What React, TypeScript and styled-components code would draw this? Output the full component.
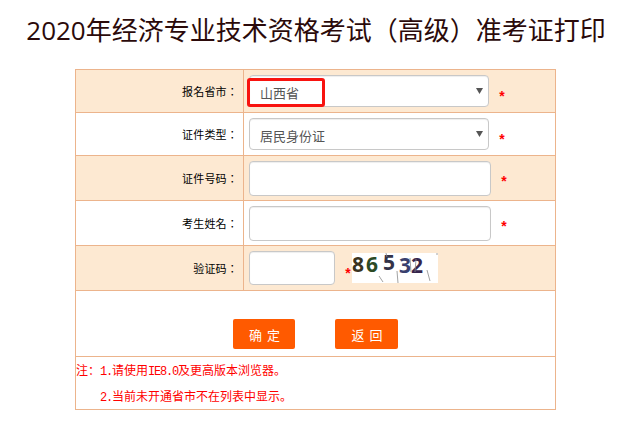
import React from "react";
import styled, { createGlobalStyle } from "styled-components";

const Global = createGlobalStyle`
  html, body { margin: 0; padding: 0; background: #fff; }
  body { width: 624px; height: 432px; overflow: hidden; font-family: "Liberation Sans", "Noto Sans CJK SC", sans-serif; }
`;

const Page = styled.div`
  width: 624px;
  height: 432px;
  overflow: hidden;
`;

const Title = styled.h1`
  margin: 0;
  height: 69px;
  padding: 13px 0 0 8px;
  box-sizing: border-box;
  text-align: center;
  font: 400 26px/34px "Open Sans", "Noto Sans CJK SC", sans-serif;
  color: #2b0a0a;
  white-space: nowrap;
`;

const Table = styled.div`
  margin-left: 75px;
  width: 481px;
  box-sizing: border-box;
  border: 1px solid #ecb48c;
`;

const Row = styled.div<{ $h: number; $shade?: boolean }>`
  display: grid;
  grid-template-columns: 168px 1fr;
  height: ${(p) => p.$h}px;
  box-sizing: border-box;
  border-bottom: 1px solid #ecb48c;
  background: ${(p) => (p.$shade ? "#fde9d2" : "#fff")};
`;

const Label = styled.div`
  display: flex;
  align-items: center;
  justify-content: flex-end;
  padding-right: 5px;
  border-right: 1px solid #ecb48c;
  font: 11px "Noto Sans CJK TC", sans-serif;
  color: #000;
  letter-spacing: 0.2px;
`;

const Cell = styled.div`
  display: flex;
  align-items: center;
  padding-left: 5px;
  position: relative;
`;

const SelectBox = styled.div`
  position: relative;
  box-sizing: border-box;
  width: 240px;
  height: 32px;
  border: 1px solid #c8c8c8;
  border-radius: 4px;
  background: #fff;
  display: flex;
  align-items: center;
  padding: 2px 0 0 10px;
  font: 13px "Noto Sans CJK SC", sans-serif;
  color: #555;
  box-shadow: inset 0 1px 1px rgba(0, 0, 0, 0.07);
`;

const Arrow = styled.svg`
  position: absolute;
  right: 4px;
  top: 11px;
  width: 9px;
  height: 8px;
`;

const Highlight = styled.div`
  position: absolute;
  left: 3px;
  top: 8px;
  width: 78px;
  height: 29px;
  box-sizing: border-box;
  border: 3px solid #f8130f;
  border-radius: 3px;
  pointer-events: none;
`;

const TextInput = styled.input<{ $w: number; $h: number }>`
  box-sizing: border-box;
  width: ${(p) => p.$w}px;
  height: ${(p) => p.$h}px;
  border: 1px solid #c8c8c8;
  border-radius: 4px;
  background: #fff;
  outline: none;
  box-shadow: inset 0 1px 1px rgba(0, 0, 0, 0.07);
`;

const Star = styled.span<{ $dy: number }>`
  display: inline-block;
  width: 8px;
  margin-left: 9px;
  text-align: center;
  position: relative;
  top: ${(p) => p.$dy}px;
  font: 700 14px/14px "Liberation Sans", sans-serif;
  color: #f00;
`;

const Captcha = styled.div`
  position: relative;
  width: 86px;
  height: 30px;
  background: #fff;
`;

const Digit = styled.span<{ $c: string; $x: number; $y: number }>`
  position: absolute;
  left: ${(p) => p.$x}px;
  top: ${(p) => p.$y}px;
  font: 700 21px/24px "Open Sans", "Liberation Sans", sans-serif;
  color: ${(p) => p.$c};
`;

const Noise = styled.svg`
  position: absolute;
  inset: 0;
  width: 86px;
  height: 30px;
`;

const ButtonRow = styled.div`
  height: 66px;
  box-sizing: border-box;
  border-bottom: 1px solid #ecb48c;
  padding: 28px 0 0 157px;
  display: flex;
  gap: 40px;
`;

const Btn = styled.button<{ $w: number }>`
  width: ${(p) => p.$w}px;
  height: 30px;
  padding: 0 0 0 2px;
  border: none;
  border-radius: 2px;
  background: #ff5a00;
  color: #fff;
  font: 13px "Noto Sans CJK SC", sans-serif;
  letter-spacing: 1px;
  white-space: pre;
`;

const Notes = styled.div`
  height: 52px;
  box-sizing: border-box;
  color: #f00;
  font: 12px/26px "Noto Sans CJK SC", sans-serif;
`;

const NoteLine = styled.div<{ $indent?: number }>`
  padding-left: ${(p) => p.$indent ?? 0}px;
  white-space: nowrap;
  height: 26px;
`;

const Latin = styled.span`
  font-family: "Liberation Mono", monospace;
  font-size: 12px;
  letter-spacing: -1.2px;
`;

const ArrowIcon = () => (
  <Arrow viewBox="0 0 9 8">
    <path d="M1 1h7L4.5 7z" fill="#555" />
  </Arrow>
);

const digits = [
  { t: "8", c: "#3a3320", x: 0, y: -1 },
  { t: "6", c: "#2b4a25", x: 14, y: -1 },
  { t: "5", c: "#333348", x: 31, y: -3 },
  { t: "3", c: "#39406e", x: 47, y: 0 },
  { t: "2", c: "#35254c", x: 59, y: 0 },
];

export default function App() {
  return (
    <Page>
      <Global />
      <Title>2020年经济专业技术资格考试（高级）准考证打印</Title>
      <Table>
        <Row $h={43} $shade>
          <Label>报名省市：</Label>
          <Cell>
            <SelectBox>
              山西省
              <ArrowIcon />
            </SelectBox>
            <Star $dy={5}>*</Star>
            <Highlight />
          </Cell>
        </Row>
        <Row $h={43}>
          <Label>证件类型：</Label>
          <Cell>
            <SelectBox>
              居民身份证
              <ArrowIcon />
            </SelectBox>
            <Star $dy={5}>*</Star>
          </Cell>
        </Row>
        <Row $h={45} $shade>
          <Label>证件号码：</Label>
          <Cell>
            <TextInput $w={242} $h={35} />
            <Star $dy={3}>*</Star>
          </Cell>
        </Row>
        <Row $h={45}>
          <Label>考生姓名：</Label>
          <Cell>
            <TextInput $w={242} $h={35} />
            <Star $dy={3}>*</Star>
          </Cell>
        </Row>
        <Row $h={45} $shade>
          <Label>验证码：</Label>
          <Cell>
            <TextInput $w={86} $h={34} />
            <Star $dy={5}>*</Star>
            <Captcha>
              {digits.map((d) => (
                <Digit key={d.x} $c={d.c} $x={d.x} $y={d.y}>{d.t}</Digit>
              ))}
              <Noise viewBox="0 0 86 30">
                <path d="M27 23l4 6M45 18l1 12M58 5l1 14M64 6l-1 13M75 17l3 11M34 0l1 4M85 0v2" stroke="#8a8a8a" strokeWidth="0.8" fill="none" />
              </Noise>
            </Captcha>
          </Cell>
        </Row>
        <ButtonRow>
          <Btn $w={62}>确 定</Btn>
          <Btn $w={63}>返 回</Btn>
        </ButtonRow>
        <Notes>
          <NoteLine>注：<Latin>1.</Latin>请使用<Latin>IE8.0</Latin>及更高版本浏览器。</NoteLine>
          <NoteLine $indent={24}><Latin>2.</Latin>当前未开通省市不在列表中显示。</NoteLine>
        </Notes>
      </Table>
    </Page>
  );
}
